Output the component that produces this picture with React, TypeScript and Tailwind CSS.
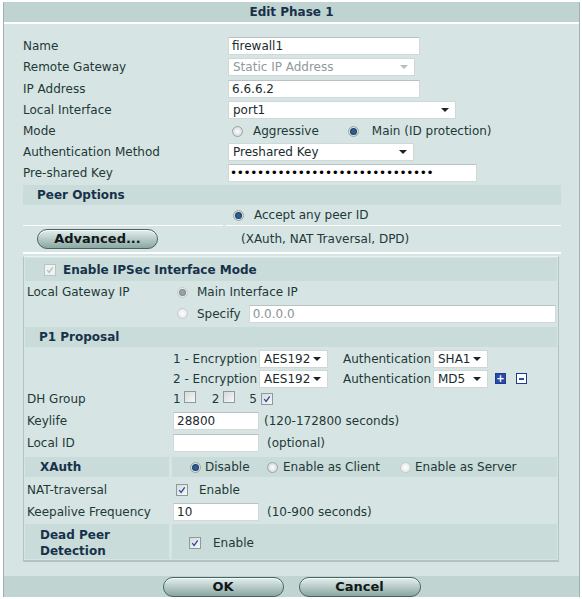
import React from "react";

const font = { fontFamily: '"DejaVu Sans", Verdana, sans-serif' };

function Radio({ checked = false, dim = false }: { checked?: boolean; dim?: boolean }) {
  return (
    <span
      className={`inline-flex h-[11px] w-[11px] shrink-0 items-center justify-center rounded-full border ${
        dim ? "border-[#c3cccc] bg-radial from-white to-[#dde3e3]" : "border-[#9aa6a6] bg-radial from-white to-[#c9d0d0]"
      }`}
    >
      {checked &&
        (dim ? (
          <span className="h-[5px] w-[5px] rounded-full bg-[#9aa3a3] ring-1 ring-[#7e8888]" />
        ) : (
          <span className="h-[5px] w-[5px] rounded-full bg-[#2b5c92] ring-1 ring-[#1d3f66]" />
        ))}
    </span>
  );
}

function Check({ checked = false, disabled = false }: { checked?: boolean; disabled?: boolean }) {
  return (
    <span
      className={`inline-flex h-[12px] w-[12px] shrink-0 items-center justify-center border ${
        disabled ? "border-[#b9c4c4] bg-[#eef2f2]" : "border-[#8c9a9a] bg-linear-to-br from-[#d5dada] to-[#f7f8f8]"
      }`}
    >
      {checked && (
        <svg viewBox="0 0 10 10" className="h-[8px] w-[8px]">
          <path
            d="M1.5 5.2 L3.9 8 L8.4 1.6"
            fill="none"
            stroke={disabled ? "#b3bdbd" : "#2c47a8"}
            strokeWidth="1.6"
          />
        </svg>
      )}
    </span>
  );
}

function Input({ value = "", w, muted = false, dots = false }: { value?: string; w: string; muted?: boolean; dots?: boolean }) {
  return (
    <div
      className={`flex h-[18px] ${w} items-center overflow-hidden border border-[#d3d9d9] border-t-[#b9c2c2] bg-white ${
        dots ? "pl-[1px] tracking-[-0.3px] text-black" : "px-[3px]"
      } ${muted ? "text-[#8a9494]" : "text-[#1a2c2c]"}`}
    >
      {value}
    </div>
  );
}

function Select({ value, w, disabled = false }: { value: string; w: string; disabled?: boolean }) {
  return (
    <div
      className={`flex h-[18px] ${w} items-center justify-between border border-[#d0d7d7] bg-white pl-[4px] pr-[6px] ${
        disabled ? "text-[#8f9a9a]" : "text-[#1a2c2c]"
      }`}
    >
      <span>{value}</span>
      <svg viewBox="0 0 8 4" className="h-[4px] w-[8px]">
        <path d="M0 0 L8 0 L4 4 Z" fill={disabled ? "#b6bebe" : "#1c2424"} />
      </svg>
    </div>
  );
}

function PillButton({ label, w }: { label: string; w: string }) {
  return (
    <div
      className={`flex h-[20px] ${w} items-center justify-center rounded-full border border-[#4a6462] bg-linear-to-b from-[#e4efed] via-[#b6cbc8] to-[#8ca6a2] text-[13px] font-bold text-[#101818] shadow-[inset_0_1px_0_#f4faf9]`}
    >
      {label}
    </div>
  );
}

function Row({ label, h = "h-[21px]", children }: { label: string; h?: string; children?: React.ReactNode }) {
  return (
    <div className={`flex ${h} items-center`}>
      <div className="w-[205px] shrink-0">{label}</div>
      <div className="flex items-center">{children}</div>
    </div>
  );
}

function InnerRow({ label, h = "h-[21px]", children }: { label: string; h?: string; children?: React.ReactNode }) {
  return (
    <div className={`flex ${h} items-center`}>
      <div className="w-[148px] shrink-0 pl-[2px]">{label}</div>
      <div className="flex items-center">{children}</div>
    </div>
  );
}

export default function App() {
  return (
    <div className="h-[599px] w-[582px] bg-white pt-[2px] text-[12px] text-[#1f3838]" style={font}>
      <div className="ml-[3px] flex h-[595px] w-[577px] flex-col border-x border-[#9eb3b1] bg-[#d6e5e3]">
        {/* title */}
        <div className="flex h-[20px] items-center justify-center bg-[#bfd3d1] font-bold text-[#17314a]">Edit Phase 1</div>
        <div className="h-[2px] bg-white" />

        <div className="flex flex-1 flex-col pl-[19px] pr-[18px] pt-[11px]">
          <Row label="Name">
            <Input value="firewall1" w="w-[192px]" />
          </Row>
          <Row label="Remote Gateway" h="h-[22px]">
            <Select value="Static IP Address" w="w-[187px]" disabled />
          </Row>
          <Row label="IP Address">
            <Input value="6.6.6.2" w="w-[192px]" />
          </Row>
          <Row label="Local Interface" h="h-[22px]">
            <Select value="port1" w="w-[228px]" />
          </Row>
          <Row label="Mode" h="h-[20px]">
            <span className="ml-[4px] flex items-center">
              <Radio />
              <span className="ml-[10px]">Aggressive</span>
            </span>
            <span className="ml-[29px] flex items-center">
              <Radio checked />
              <span className="ml-[13px]">Main (ID protection)</span>
            </span>
          </Row>
          <Row label="Authentication Method">
            <Select value="Preshared Key" w="w-[186px]" />
          </Row>
          <Row label="Pre-shared Key">
            <Input value={"\u2022".repeat(30)} w="w-[249px]" dots />
          </Row>

          {/* peer options */}
          <div className="mt-[2px] flex h-[20px] items-center bg-[#c9dcda] pl-[14px] font-bold text-[#17314a]">Peer Options</div>
          <div className="flex h-[21px]">
            <div className="w-[200px] border-b border-white" />
            <div className="ml-[3px] flex flex-1 items-center border-b border-white pl-[7px]">
              <Radio checked />
              <span className="ml-[10px]">Accept any peer ID</span>
            </div>
          </div>
          <div className="flex h-[28px] border-b-2 border-white">
            <div className="flex w-[200px] items-center pl-[14px]">
              <PillButton label="Advanced..." w="w-[121px]" />
            </div>
            <div className="ml-[3px] flex flex-1 items-center pl-[15px]">(XAuth, NAT Traversal, DPD)</div>
          </div>

          {/* inner panel */}
          <div className="mr-[2px] mt-[2px] flex flex-col border border-b-2 border-[#b2c4c2] border-t-[#e9f1f0] px-[1px] pb-[1px] pt-[1px]">
            <div className="flex h-[23px] items-center bg-[#c9dcda] pl-[19px] font-bold text-[#17314a]">
              <Check checked disabled />
              <span className="ml-[7px]">Enable IPSec Interface Mode</span>
            </div>
            <InnerRow label="Local Gateway IP" h="h-[22px]">
              <span className="ml-[4px] flex items-center">
                <Radio checked dim />
                <span className="ml-[9px]">Main Interface IP</span>
              </span>
            </InnerRow>
            <InnerRow label="">
              <span className="ml-[4px] flex items-center">
                <Radio dim />
                <span className="ml-[9px]">Specify</span>
              </span>
              <span className="ml-[8px]">
                <Input value="0.0.0.0" w="w-[307px]" muted />
              </span>
            </InnerRow>
            <div className="mt-[3px] flex h-[20px] items-center bg-[#c9dcda] pl-[14px] font-bold text-[#17314a]">P1 Proposal</div>
            <InnerRow label="" h="h-[20px] mt-[2px]">
              <span className="w-[86px]">1 - Encryption</span>
              <Select value="AES192" w="w-[69px]" />
              <span className="ml-[15px] w-[90px]">Authentication</span>
              <Select value="SHA1" w="w-[55px]" />
            </InnerRow>
            <InnerRow label="" h="h-[19px]">
              <span className="w-[86px]">2 - Encryption</span>
              <Select value="AES192" w="w-[69px]" />
              <span className="ml-[15px] w-[90px]">Authentication</span>
              <Select value="MD5" w="w-[55px]" />
              <span className="ml-[7px] flex h-[11px] w-[11px] items-center justify-center border border-[#1f3b8f] bg-[#2a4aa6] text-[10px] font-bold leading-none text-white">
                +
              </span>
              <span className="ml-[10px] flex h-[11px] w-[11px] items-center justify-center border border-[#1f3b8f] bg-white">
                <span className="h-[2px] w-[5px] bg-[#2a4aa6]" />
              </span>
            </InnerRow>
            <InnerRow label="DH Group" h="h-[22px]">
              <span>1</span>
              <span className="ml-[3px]">
                <Check />
              </span>
              <span className="ml-[16px]">2</span>
              <span className="ml-[4px]">
                <Check />
              </span>
              <span className="ml-[14px]">5</span>
              <span className="ml-[4px]">
                <Check checked />
              </span>
            </InnerRow>
            <InnerRow label="Keylife">
              <Input value="28800" w="w-[86px]" />
              <span className="ml-[5px]">(120-172800 seconds)</span>
            </InnerRow>
            <InnerRow label="Local ID" h="h-[23px]">
              <Input w="w-[86px]" />
              <span className="ml-[8px]">(optional)</span>
            </InnerRow>
            <div className="mt-[3px] flex h-[20px]">
              <div className="flex w-[144px] items-center bg-[#c9dcda] pl-[15px] font-bold text-[#17314a]">XAuth</div>
              <div className="ml-[3px] flex flex-1 items-center bg-[#c9dcda] pl-[18px]">
                <span className="flex w-[77px] items-center">
                  <Radio checked />
                  <span className="ml-[4px]">Disable</span>
                </span>
                <span className="flex w-[133px] items-center">
                  <Radio />
                  <span className="ml-[5px]">Enable as Client</span>
                </span>
                <span className="flex items-center">
                  <Radio dim />
                  <span className="ml-[4px]">Enable as Server</span>
                </span>
              </div>
            </div>
            <InnerRow label="NAT-traversal" h="h-[22px] mt-[2px]">
              <span className="ml-[3px]">
                <Check checked />
              </span>
              <span className="ml-[11px]">Enable</span>
            </InnerRow>
            <InnerRow label="Keepalive Frequency">
              <Input value="10" w="w-[86px]" />
              <span className="ml-[8px]">(10-900 seconds)</span>
            </InnerRow>
            <div className="mt-[2px] flex h-[35px]">
              <div className="flex w-[144px] items-center bg-[#c9dcda] pl-[15px] pt-[3px] font-bold leading-[16px] text-[#17314a]">
                Dead Peer
                <br />
                Detection
              </div>
              <div className="ml-[3px] flex flex-1 items-center bg-[#c9dcda] pl-[17px] pt-[2px]">
                <Check checked />
                <span className="ml-[12px]">Enable</span>
              </div>
            </div>
          </div>
          <div className="flex-1" />
        </div>

        {/* footer */}
        <div className="flex h-[21px] items-start justify-center gap-[15px] bg-[#c0d4d2] pt-[1px]">
          <PillButton label="OK" w="w-[121px]" />
          <PillButton label="Cancel" w="w-[122px]" />
        </div>
      </div>
    </div>
  );
}
